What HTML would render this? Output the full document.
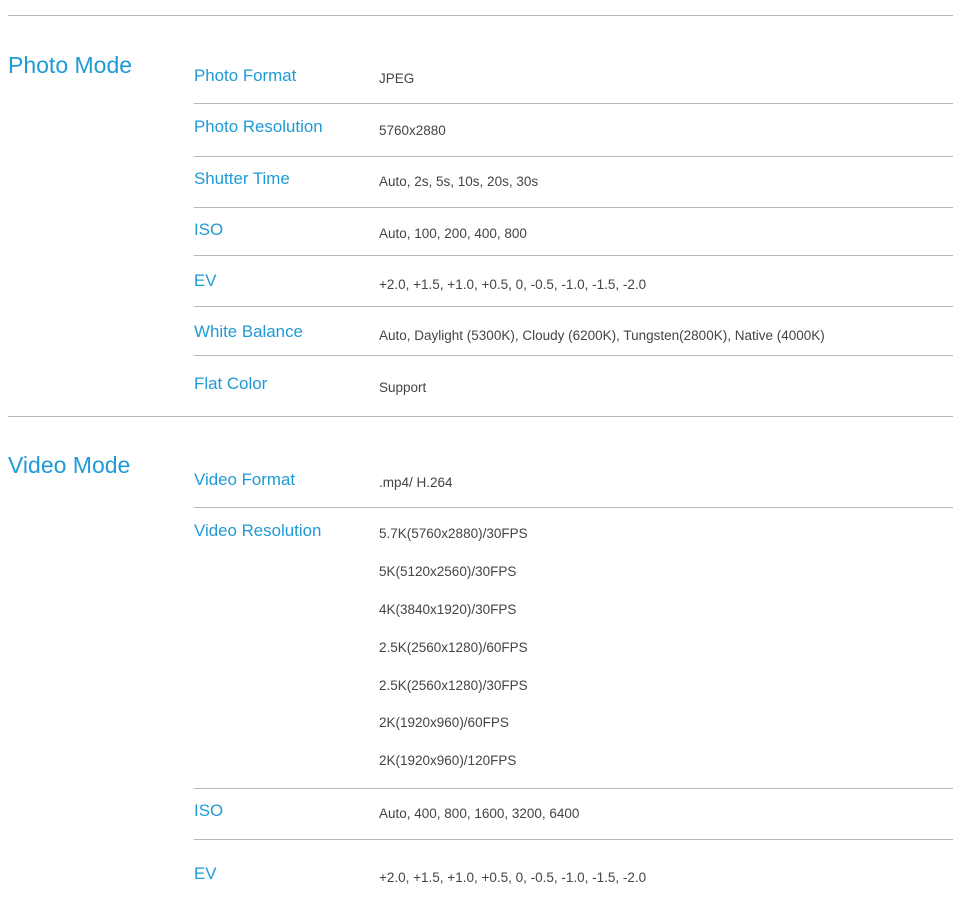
<!DOCTYPE html>
<html><head><meta charset="utf-8"><style>
body{margin:0;width:960px;height:900px;background:#fff;position:relative;overflow:hidden;font-family:"Liberation Sans",Arial,sans-serif}
.l{position:absolute;height:1px;background:#b8b8b8;right:7px}
.h{position:absolute;left:8px;font-size:23px;color:#1e9ad6;line-height:28px}
.k{position:absolute;left:194px;font-size:16.9px;color:#1e9ad6;line-height:18px;white-space:nowrap;margin-top:1px}
.v{position:absolute;left:379px;font-size:13.5px;color:#444;line-height:16px;white-space:nowrap;margin-top:1px}
</style></head><body>
<div class="l" style="top:15px;left:8px"></div>
<div class="h" style="top:51px">Photo Mode</div>
<div class="k" style="top:66px">Photo Format</div><div class="v" style="top:70px">JPEG</div>
<div class="l" style="top:103px;left:194px"></div>
<div class="k" style="top:117px">Photo Resolution</div><div class="v" style="top:122px">5760x2880</div>
<div class="l" style="top:156px;left:194px"></div>
<div class="k" style="top:169px">Shutter Time</div><div class="v" style="top:173px">Auto, 2s, 5s, 10s, 20s, 30s</div>
<div class="l" style="top:207px;left:194px"></div>
<div class="k" style="top:220px">ISO</div><div class="v" style="top:225px">Auto, 100, 200, 400, 800</div>
<div class="l" style="top:255px;left:194px"></div>
<div class="k" style="top:271px">EV</div><div class="v" style="top:276px">+2.0, +1.5, +1.0, +0.5, 0, -0.5, -1.0, -1.5, -2.0</div>
<div class="l" style="top:306px;left:194px"></div>
<div class="k" style="top:322px">White Balance</div><div class="v" style="top:327px">Auto, Daylight (5300K), Cloudy (6200K), Tungsten(2800K), Native (4000K)</div>
<div class="l" style="top:355px;left:194px"></div>
<div class="k" style="top:374px">Flat Color</div><div class="v" style="top:379px">Support</div>
<div class="l" style="top:416px;left:8px"></div>
<div class="h" style="top:451px">Video Mode</div>
<div class="k" style="top:470px">Video Format</div><div class="v" style="top:474px">.mp4/ H.264</div>
<div class="l" style="top:507px;left:194px"></div>
<div class="k" style="top:521px">Video Resolution</div>
<div class="v" style="top:525px">5.7K(5760x2880)/30FPS</div>
<div class="v" style="top:563px">5K(5120x2560)/30FPS</div>
<div class="v" style="top:601px">4K(3840x1920)/30FPS</div>
<div class="v" style="top:639px">2.5K(2560x1280)/60FPS</div>
<div class="v" style="top:677px">2.5K(2560x1280)/30FPS</div>
<div class="v" style="top:714px">2K(1920x960)/60FPS</div>
<div class="v" style="top:752px">2K(1920x960)/120FPS</div>
<div class="l" style="top:788px;left:194px"></div>
<div class="k" style="top:801px">ISO</div><div class="v" style="top:805px">Auto, 400, 800, 1600, 3200, 6400</div>
<div class="l" style="top:839px;left:194px"></div>
<div class="k" style="top:864px">EV</div><div class="v" style="top:869px">+2.0, +1.5, +1.0, +0.5, 0, -0.5, -1.0, -1.5, -2.0</div>
</body></html>
